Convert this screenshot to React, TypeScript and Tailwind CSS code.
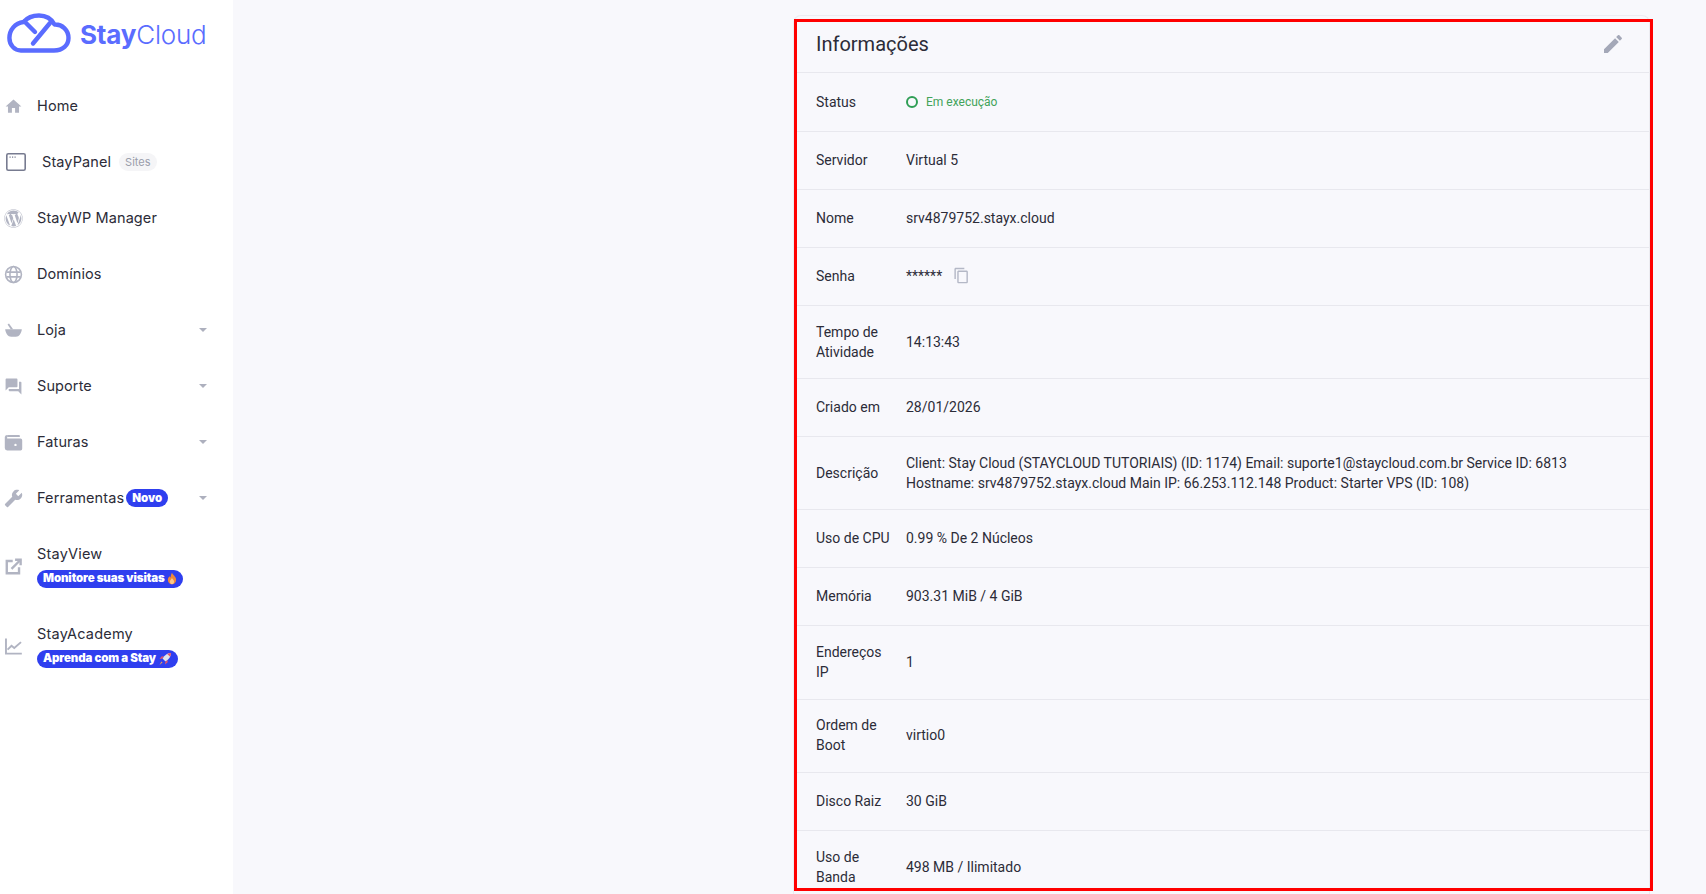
import { FaWordpress } from "react-icons/fa";

const Icon = ({ d, className }: { d: string; className: string }) => (
  <svg viewBox="0 0 24 24" fill="currentColor" className={className}>
    <path d={d} />
  </svg>
);

const paths = {
  home: "M10 20v-6h4v6h5v-8h3L12 3 2 12h3v8z",
  forum: "M21 6h-2v9H6v2c0 .55.45 1 1 1h11l4 4V7c0-.55-.45-1-1-1zm-4 6V3c0-.55-.45-1-1-1H3c-.55 0-1 .45-1 1v14l4-4h10c.55 0 1-.45 1-1z",
  edit: "M3 17.25V21h3.75L17.81 9.94l-3.75-3.75L3 17.25zM20.71 7.04c.39-.39.39-1.02 0-1.41l-2.34-2.34c-.39-.39-1.02-.39-1.41 0l-1.83 1.83 3.75 3.75 1.83-1.83z",
  copy: "M16 1H4c-1.1 0-2 .9-2 2v14h2V3h12V1zm3 4H8c-1.1 0-2 .9-2 2v14c0 1.1.9 2 2 2h11c1.1 0 2-.9 2-2V7c0-1.1-.9-2-2-2zm0 16H8V7h11v14z",
  wrench: "M22.7 19l-9.1-9.1c.9-2.3.4-5-1.5-6.9-2-2-5-2.4-7.4-1.3L9 6 6 9 1.6 4.7C.4 7.1.9 10.1 2.9 12.1c1.9 1.9 4.6 2.4 6.9 1.5l9.1 9.1c.4.4 1 .4 1.4 0l2.3-2.3c.5-.4.5-1.1.1-1.4z",
};

const iconClass = "w-[19px] h-[19px] text-[#b1b4c2] shrink-0";

const GlobeIcon = () => (
  <svg viewBox="0 0 24 24" fill="none" stroke="currentColor" strokeWidth="2" className={iconClass}>
    <circle cx="12" cy="12" r="10" />
    <ellipse cx="12" cy="12" rx="4.5" ry="10" />
    <path d="M3 9h18M3 15h18" />
  </svg>
);

const BasketIcon = () => (
  <svg viewBox="0 0 24 24" fill="currentColor" className={iconClass}>
    <path d="M1.500 10.500h21c-.4 4.800-3.400 9.500-7.500 9.500H9c-4.100 0-7.100-4.700-7.500-9.500z" />
    <path d="M4.500 4.500l1.800-1.300 5.200 7.300H8.500z" />
  </svg>
);

const WalletIcon = () => (
  <svg viewBox="0 0 24 24" fill="currentColor" className={iconClass}>
    <path d="M4 2.500h15a1 1 0 0 1 1 1V5H4z" />
    <path d="M4 7h17a2 2 0 0 1 2 2v11a2 2 0 0 1-2 2H4a3 3 0 0 1-3-3V5a3 3 0 0 1 3-2.500zm10.500 6.500a1.500 1.500 0 1 0 0 3 1.500 1.500 0 0 0 0-3z" fillRule="evenodd" />
  </svg>
);

const LaunchIcon = () => (
  <svg viewBox="0 0 24 24" fill="none" stroke="currentColor" strokeWidth="3" className={iconClass}>
    <path d="M11 5H3.500v15.500H19V13" />
    <path d="M14 3.500h7v7" />
    <path d="M21 3.500L9.500 15" />
  </svg>
);

const ChartIcon = () => (
  <svg viewBox="0 0 24 24" fill="none" stroke="currentColor" strokeWidth="2.400" className={iconClass}>
    <path d="M2.500 2v19h20" />
    <path d="M4.500 16l5-5 3.500 3L21.500 6.500" />
  </svg>
);

const PanelIcon = () => (
  <svg viewBox="0 0 20 18" fill="none" className="w-5 h-[18px] text-[#777b90] shrink-0">
    <rect x="0.800" y="0.800" width="18.400" height="16.400" rx="1.500" stroke="currentColor" strokeWidth="1.600" />
    <path d="M3.500 4.200h1.200M6 4.200h1.200M8.500 4.200h1.200" stroke="currentColor" strokeWidth="1.200" />
  </svg>
);

const FireIcon = () => (
  <svg viewBox="0 0 12 14" className="w-[10px] h-[13px] ml-[2px]">
    <path d="M6 0c.6 2.500 5 4.500 5 8.500C11 11.500 8.800 14 6 14S1 11.500 1 8.500c0-2 1.200-3 1.800-4.200.6.800 1 1.200 1.500 1.400C4.500 3.500 5 1.500 6 0z" fill="#f0883a" />
    <path d="M6 6.500c.3 1.200 2.500 2.200 2.500 4.200C8.500 12.500 7.400 14 6 14s-2.500-1.500-2.500-3.300C3.500 9 5.500 8 6 6.500z" fill="#fbc98a" />
  </svg>
);

const RocketIcon = () => (
  <svg viewBox="0 0 14 14" className="w-[14px] h-[14px] ml-[2px]">
    <path d="M13 1C9.500 1 6.500 3 4.500 6.500l3 3C11 7.500 13 4.500 13 1z" fill="#dfe3ee" />
    <path d="M13 1c-1.500 0-2.800.3-3.800.9l2.900 2.900c.6-1.100.9-2.300.9-3.800z" fill="#e2566a" />
    <path d="M4.500 6.500L1.500 7l2-2.500 2.300-.3zM7.500 9.500L7 12.500l2.500-2 .3-2.300z" fill="#e2566a" />
    <path d="M3.500 9.500l1 1-3 2.500z" fill="#f6a04d" />
  </svg>
);

const Caret = () => (
  <span className="ml-auto mr-[26px] w-0 h-0 border-x-[4px] border-x-transparent border-t-[4px] border-t-[#adb0be]" />
);

const NavItem = ({ icon, label, caret, extra }: { icon: React.ReactNode; label: string; caret?: boolean; extra?: React.ReactNode }) => (
  <div className="h-14 flex items-center pl-1">
    {icon}
    <span className="ml-[14px] text-[#2c2c38] text-[14.5px] tracking-[0.1px]">{label}</span>
    {extra}
    {caret && <Caret />}
  </div>
);

const BadgeItem = ({ icon, label, badge, emoji }: { icon: React.ReactNode; label: string; badge: string; emoji: React.ReactNode }) => (
  <div className="h-20 flex items-center pl-1">
    {icon}
    <div className="ml-[14px] pb-[2px] flex flex-col items-start gap-[5px]">
      <span className="text-[#2c2c38] text-[14.5px] leading-[22px] tracking-[0.2px]">{label}</span>
      <span className="flex items-center h-[18px] px-[6px] rounded-full bg-[#2f3fef] text-white text-[11.5px] font-black tracking-[-0.1px]">
        {badge}
        {emoji}
      </span>
    </div>
  </div>
);

const rows: { label: string; value: React.ReactNode }[] = [
  {
    label: "Status",
    value: (
      <span className="flex items-center text-[12px] text-[#43a35a]">
        <span className="w-3 h-3 rounded-full border-2 border-[#2f9e55] mr-2" />
        Em execução
      </span>
    ),
  },
  { label: "Servidor", value: "Virtual 5" },
  { label: "Nome", value: "srv4879752.stayx.cloud" },
  {
    label: "Senha",
    value: (
      <span className="flex items-center">
        ******
        <Icon d={paths.copy} className="w-[17px] h-[17px] ml-[11px] text-[#b4b8c6]" />
      </span>
    ),
  },
  { label: "Tempo de Atividade", value: "14:13:43" },
  { label: "Criado em", value: "28/01/2026" },
  {
    label: "Descrição",
    value: (
      <span className="block max-w-[680px]">
        Client: Stay Cloud (STAYCLOUD TUTORIAIS) (ID: 1174) Email: suporte1@staycloud.com.br Service ID: 6813 Hostname: srv4879752.stayx.cloud Main IP: 66.253.112.148 Product: Starter VPS (ID: 108)
      </span>
    ),
  },
  { label: "Uso de CPU", value: "0.99 % De 2 Núcleos" },
  { label: "Memória", value: "903.31 MiB / 4 GiB" },
  { label: "Endereços IP", value: "1" },
  { label: "Ordem de Boot", value: "virtio0" },
  { label: "Disco Raiz", value: "30 GiB" },
  { label: "Uso de Banda", value: "498 MB / Ilimitado" },
];

export default function App() {
  return (
    <div className="h-screen flex overflow-hidden bg-[#f8f8fc] font-['Roboto',sans-serif]">
      <aside className="w-[233px] shrink-0 bg-white font-['Inter',sans-serif]">
        <div className="h-[78px] flex items-start pt-[13px] pl-[7px]">
          <svg viewBox="0 0 66 42" fill="none" stroke="#5a6cff" strokeWidth="4.400" strokeLinecap="round" strokeLinejoin="round" className="w-[66px] h-[42px] shrink-0">
            <path d="M14 37.500H47C56 37.500 61.500 32 61.500 25 61.500 17 55 11 47.500 11.500 44 5 38 2.500 32 2.500 25 2.500 20 5 16.500 9 8 10 2.400 17 2.400 25 2.400 32 7.500 37.500 14 37.500z" />
            <path d="M17.500 8.500L28 19" />
            <path d="M26 30.500L43 10" />
          </svg>
          <div className="ml-[7px] mt-[7px] text-[26px] leading-[30px] text-[#5a6cff] tracking-[-0.2px] whitespace-nowrap">
            <span className="font-bold">Stay</span>
            <span className="font-light">Cloud</span>
          </div>
        </div>
        <nav>
          <NavItem icon={<Icon d={paths.home} className={iconClass} />} label="Home" />
          <div className="h-14 flex items-center pl-[6px]">
            <PanelIcon />
            <span className="ml-4 text-[#2c2c38] text-[14.5px] tracking-[0.1px]">StayPanel</span>
            <span className="ml-2 h-[18px] px-[6px] rounded-full bg-[#f5f5f7] text-[#9a9dab] text-[11px] leading-[18px]">Sites</span>
          </div>
          <NavItem icon={<FaWordpress className={iconClass} />} label="StayWP Manager" />
          <NavItem icon={<GlobeIcon />} label="Domínios" />
          <NavItem icon={<BasketIcon />} label="Loja" caret />
          <NavItem icon={<Icon d={paths.forum} className={iconClass} />} label="Suporte" caret />
          <NavItem icon={<WalletIcon />} label="Faturas" caret />
          <NavItem
            icon={<Icon d={paths.wrench} className={`${iconClass} -scale-x-100`} />}
            label="Ferramentas"
            caret
            extra={<span className="ml-[2px] h-[18px] px-[6px] rounded-full bg-[#2f3fef] text-white text-[11.5px] font-black leading-[18px]">Novo</span>}
          />
          <BadgeItem icon={<LaunchIcon />} label="StayView" badge="Monitore suas visitas" emoji={<FireIcon />} />
          <BadgeItem icon={<ChartIcon />} label="StayAcademy" badge="Aprenda com a Stay" emoji={<RocketIcon />} />
        </nav>
      </aside>

      <main className="flex-1 min-w-0 pl-[560px] pt-[15px]">
        <div className="relative w-[857px] rounded-lg border-t border-x border-[#ececf1] text-[14px] leading-5 text-[#2c2c38]">
          <div className="h-[57px] border-b border-[#e8e8ee] flex items-center pl-[22px] pr-[24px]">
            <h2 className="text-[20px] text-[#2c2c38]">Informações</h2>
            <Icon d={paths.edit} className="ml-auto w-6 h-6 text-[#a4a8b8]" />
          </div>
          <div className="mt-px">
            {rows.map((row) => (
              <div key={row.label} className="min-h-[58px] pt-[15.6px] pb-[16.65px] flex items-center pl-[22px] border-b border-[#e8e8ee]">
                <div className="w-[78px] mr-[12px] shrink-0">{row.label}</div>
                <div>{row.value}</div>
              </div>
            ))}
          </div>
          {/* red annotation frame */}
          <div className="absolute left-0 top-[3px] w-[859px] h-[872px] border-[3px] border-[#ff0000] pointer-events-none" />
        </div>
      </main>
    </div>
  );
}
